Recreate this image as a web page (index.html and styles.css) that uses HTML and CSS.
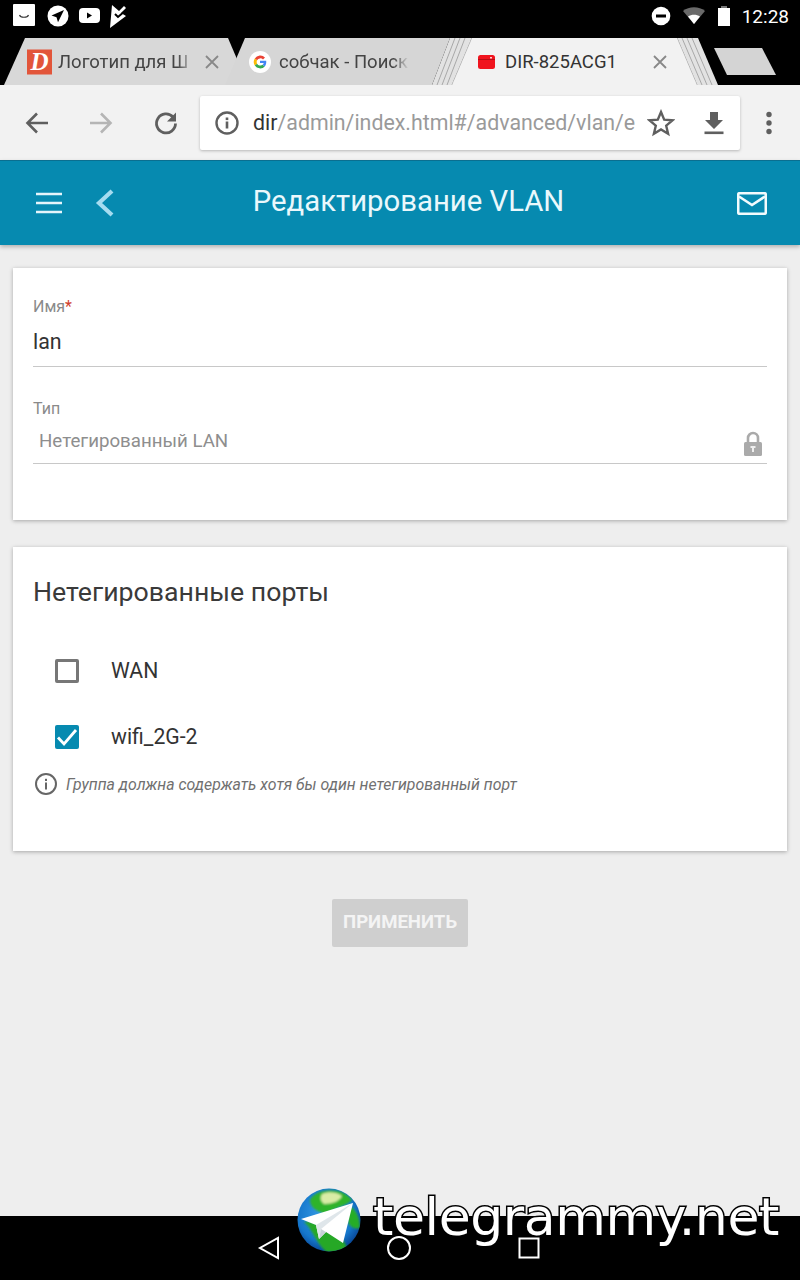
FILE: index.html
```html
<!DOCTYPE html>
<html lang="ru">

<head>
    <meta charset="UTF-8">
    <meta name="viewport" content="width=device-width, initial-scale=1.0">
    <title>Редактирование VLAN</title>
    <link rel="stylesheet" href="styles.css">
</head>

<body>
    <div class="status-bar">
        <div class="status-left">
            <svg width="26" height="26" viewBox="0 0 26 26"><rect x="1" y="1" width="22" height="22" rx="1" fill="#fff"/><path d="M7.500 12c1 3 8 3 9 0" fill="none" stroke="#333" stroke-width="1.100"/></svg>
            <svg width="24" height="24" viewBox="0 0 24 24"><circle cx="12" cy="12" r="10.5" fill="#fff"/><path d="M18 6 5.500 11.500l5 1.800 1.500 5z" fill="#000"/></svg>
            <svg width="24" height="24" viewBox="0 0 24 24"><rect x="1" y="4" width="21" height="15" rx="4" fill="#fff"/><path d="M9 8.500v6l5-3z" fill="#000"/></svg>
            <svg width="24" height="24" viewBox="0 0 24 24"><path d="M2 1l7 6 5-5 2 2-5 5 5 3-16 12z" fill="#fff"/><path d="M5 10l3 3 7-6" fill="none" stroke="#000" stroke-width="2"/></svg>
        </div>
        <div class="status-right">
            <svg width="20" height="20" viewBox="0 0 20 20"><circle cx="10" cy="10" r="9.300" fill="#fff"/><rect x="5" y="8.500" width="10" height="3" fill="#000"/></svg>
            <svg width="24" height="20" viewBox="0 0 24 20"><path d="M1 5c6-5 16-5 22 0L12 18z" fill="#6a6a6a"/><path d="M6 10.500c3.500-2.500 8.500-2.500 12 0L12 18z" fill="#fff"/></svg>
            <svg width="14" height="20" viewBox="0 0 14 20"><rect x="4" y="0" width="6" height="3" fill="#777"/><rect x="1" y="2" width="12" height="18" fill="#fff"/></svg>
            <span class="clock">12:28</span>
        </div>
    </div>

    <div class="tab-strip">
        <div class="tab tab-first">
            <svg class="favicon" width="25" height="26" viewBox="0 0 25 26"><rect width="25" height="25" y="0.500" fill="#e2553a"/><text x="12.500" y="20.500" text-anchor="middle" class="favicon-letter">D</text></svg>
            <span class="tab-title">Логотип для Ш</span>
            <svg class="tab-close" width="16" height="16" viewBox="0 0 16 16"><path d="M2 2l12 12M14 2 2 14" stroke="#888" stroke-width="1.800"/></svg>
        </div>
        <div class="tab tab-second">
            <svg class="favicon" width="22" height="22" viewBox="0 0 22 22"><circle cx="11" cy="11" r="11" fill="#fff"/><path d="M16 6.500A6.500 6.500 0 0 0 5.800 7.500l2.300 1.800A3.700 3.700 0 0 1 14 8.500z" fill="#ea4335"/><path d="M5.800 7.500a6.500 6.500 0 0 0 0 7l2.300-1.800a3.700 3.700 0 0 1 0-3.400z" fill="#fbbc05"/><path d="M5.800 14.500a6.500 6.500 0 0 0 10 1l-2.200-1.800a3.700 3.700 0 0 1-5.500-1z" fill="#34a853"/><path d="M11 9.800h6.200c.3 2.300-.3 4.300-1.400 5.700l-2.200-1.800c.6-.5 1-1.100 1.100-1.700H11z" fill="#4285f4"/></svg>
            <span class="tab-title">собчак - Поиск</span>
        </div>
        <svg class="tab-stack tab-stack-left" width="40" height="47" viewBox="0 0 40 47">
            <path d="M0 47 18 0h22L20 47z" fill="#e2e2e2"/>
            <path d="M5 47 23 0M10 47 28 0M15 47 33 0M20 47 40 0" stroke="#a8a8a8" stroke-width="1" fill="none"/>
        </svg>
        <div class="tab tab-active">
            <svg class="favicon" width="18" height="16" viewBox="0 0 18 16"><rect y="1" width="17" height="14" rx="2.500" fill="#f0141e"/><rect y="5" width="17" height="1" fill="#b80d14"/><rect x="12" y="3" width="2" height="1.500" fill="#ffd0d0"/></svg>
            <span class="tab-title">DIR-825ACG1</span>
            <svg class="tab-close" width="16" height="16" viewBox="0 0 16 16"><path d="M2 2l12 12M14 2 2 14" stroke="#888" stroke-width="1.800"/></svg>
        </div>
        <svg class="tab-stack tab-stack-right" width="41" height="47" viewBox="0 0 41 47">
            <path d="M0 0h21l20 47H20z" fill="#e2e2e2"/>
            <path d="M0 0l20 47M5 0l20 47M10 0l20 47M15 0l20 47" stroke="#a8a8a8" stroke-width="1" fill="none"/>
        </svg>
        <div class="new-tab"></div>
    </div>

    <div class="toolbar">
        <svg width="26" height="26" viewBox="0 0 26 26"><path d="M24 13H4M13 3.500 3.500 13l9.500 9.500" fill="none" stroke="#5f5f5f" stroke-width="2.600"/></svg>
        <svg class="nav-forward" width="26" height="26" viewBox="0 0 26 26"><path d="M2 13h20M13 3.500l9.500 9.500-9.500 9.500" fill="none" stroke="#b5b5b5" stroke-width="2.600"/></svg>
        <svg class="nav-reload" width="26" height="26" viewBox="0 0 26 26"><path d="M20 7a9.500 9.500 0 1 0 2.500 6.500" fill="none" stroke="#5f5f5f" stroke-width="2.800"/><path d="M23 2.500v9h-9z" fill="#5f5f5f"/></svg>
        <div class="omnibox">
            <svg class="omni-info" width="26" height="26" viewBox="0 0 26 26"><circle cx="13" cy="13" r="10.500" fill="none" stroke="#5f5f5f" stroke-width="2.400"/><rect x="11.700" y="11.500" width="2.600" height="7" fill="#5f5f5f"/><rect x="11.700" y="7.500" width="2.600" height="2.600" fill="#5f5f5f"/></svg>
            <div class="omni-url"><span class="omni-host">dir</span>/admin/index.html#/advanced/vlan/e</div>
            <svg class="omni-star" width="28" height="28" viewBox="0 0 28 28"><path d="M14 3l3.200 7.600 8.200.7-6.200 5.400 1.900 8L14 20.500l-7.100 4.200 1.900-8-6.200-5.400 8.200-.7z" fill="none" stroke="#5f5f5f" stroke-width="2.400"/></svg>
            <svg class="omni-download" width="24" height="26" viewBox="0 0 24 26"><path d="M8 2h8v8h5L12 19 3 10h5z" fill="#5f5f5f"/><rect x="2.500" y="21.500" width="19" height="2.600" fill="#5f5f5f"/></svg>
        </div>
        <svg class="nav-menu" width="8" height="24" viewBox="0 0 8 24"><circle cx="4" cy="3.500" r="2.700" fill="#5f5f5f"/><circle cx="4" cy="12" r="2.700" fill="#5f5f5f"/><circle cx="4" cy="20.500" r="2.700" fill="#5f5f5f"/></svg>
    </div>

    <header class="app-header">
        <svg class="menu-icon" width="26" height="22" viewBox="0 0 26 22"><path d="M0 2h26M0 11h26M0 20h26" stroke="#e4f5fb" stroke-width="2.400"/></svg>
        <svg class="back-icon" width="22" height="30" viewBox="0 0 22 30"><path d="M19 3 6 15l13 12" fill="none" stroke="#a5dcf0" stroke-width="4.200"/></svg>
        <h1 class="app-title">Редактирование VLAN</h1>
        <svg class="mail-icon" width="30" height="23" viewBox="0 0 30 23"><rect x="1.200" y="1.200" width="27.600" height="20.600" rx="1.500" fill="none" stroke="#f2fbfd" stroke-width="2.600"/><path d="M2 4.500l13 8.500 13-8.500" fill="none" stroke="#f2fbfd" stroke-width="2.600"/></svg>
    </header>

    <main class="content">
        <section class="card card-fields">
            <div class="field">
                <label class="field-label">Имя<span class="required">*</span></label>
                <div class="field-value">lan</div>
            </div>
            <div class="field field-locked">
                <label class="field-label">Тип</label>
                <div class="field-value">
                    Нетегированный LAN
                    <svg width="20" height="26" viewBox="0 0 20 26"><path d="M5 12V7a5 5 0 0 1 10 0v5" fill="none" stroke="#aaa" stroke-width="2.600"/><rect x="1" y="11" width="18" height="14" rx="1.500" fill="#aaa"/><rect x="9" y="16" width="2" height="5" fill="#eee"/><rect x="7.500" y="15" width="5" height="2" fill="#eee"/></svg>
                </div>
            </div>
        </section>

        <section class="card card-ports">
            <h2 class="card-title">Нетегированные порты</h2>
            <div class="port">
                <span class="checkbox"></span>
                <span class="port-name">WAN</span>
            </div>
            <div class="port">
                <span class="checkbox checkbox-on">
                    <svg width="24" height="24" viewBox="0 0 24 24"><path d="M3 12.500l6 6.500L21 5" fill="none" stroke="#fff" stroke-width="2.800"/></svg>
                </span>
                <span class="port-name">wifi_2G-2</span>
            </div>
            <div class="hint">
                <svg width="24" height="24" viewBox="0 0 24 24"><circle cx="12" cy="12" r="10" fill="none" stroke="#666" stroke-width="2"/><rect x="11" y="10.500" width="2" height="7" fill="#666"/><rect x="11" y="6.800" width="2" height="2.200" fill="#666"/></svg>
                <span>Группа должна содержать хотя бы один нетегированный порт</span>
            </div>
        </section>

        <div class="actions">
            <button class="apply-button" disabled>ПРИМЕНИТЬ</button>
        </div>
    </main>

    <div class="nav-bar">
        <svg width="24" height="26" viewBox="0 0 24 26"><path d="M21 3v20L3 13z" fill="none" stroke="#fff" stroke-width="2"/></svg>
        <svg width="26" height="26" viewBox="0 0 26 26"><circle cx="13" cy="13" r="11" fill="none" stroke="#fff" stroke-width="2"/></svg>
        <svg width="24" height="24" viewBox="0 0 24 24"><rect x="2.500" y="2.500" width="19" height="19" fill="none" stroke="#fff" stroke-width="2"/></svg>
    </div>

    <!-- watermark over the nav bar -->
    <div class="watermark">
        <svg width="66" height="64" viewBox="0 0 66 64">
            <defs>
                <radialGradient id="globe" cx="45%" cy="40%" r="60%">
                    <stop offset="0" stop-color="#3aa0e8"/>
                    <stop offset="0.75" stop-color="#1577cc"/>
                    <stop offset="1" stop-color="#0a4a9a"/>
                </radialGradient>
                <clipPath id="globe-clip"><circle cx="33" cy="32" r="31.500"/></clipPath>
                <filter id="land-blur"><feGaussianBlur stdDeviation="1.200"/></filter>
            </defs>
            <circle cx="33" cy="32" r="31.500" fill="url(#globe)"/>
            <g clip-path="url(#globe-clip)">
                <g filter="url(#land-blur)">
                    <path d="M14 12C20 0 46-2 56 12 50 18 38 20 30 26 22 24 14 20 14 12z" fill="#2fb32a"/>
                    <path d="M26 6c6-3 16-2 20 2-2 5-10 8-18 8-4-3-4-7-2-10z" fill="#d9eca6"/>
                    <path d="M52 18c6 0 12 10 12 22-6 2-12-2-12-8z" fill="#25ad25"/>
                    <path d="M8 34c8 6 10 18 22 30h22c-2-12-12-22-26-26-6-2-12-6-18-4z" fill="#25a825"/>
                </g>
            </g>
            <path d="M57 15 5 31l15 6 3 14 7-7 17 11z" fill="#fff"/>
            <path d="M57 15 20 37l3 14 2-10z" fill="#dfe6ea"/>
            <path d="M25 41l-2 10 7-7z" fill="#c8d2d8"/>
        </svg>
        <span class="watermark-text">telegrammy.net</span>
    </div>
</body>

</html>
```

FILE: styles.css
```css
* {
    box-sizing: border-box;
}

html,
body {
    margin: 0;
    height: 1280px;
    overflow: hidden;
}

body {
    position: relative;
    display: flex;
    flex-direction: column;
    font-family: Roboto, "Noto Sans", sans-serif;
    background-color: #eeeeee;
    color: #333333;
}

/* android status bar */
.status-bar {
    height: 38px;
    background-color: #000000;
    display: flex;
    justify-content: space-between;
    align-items: center;
    padding: 0 11px 6px 12px;
}

.status-left,
.status-right {
    display: flex;
    align-items: center;
}

.status-left {
    gap: 8px;
}

.status-right {
    gap: 11px;
}

.clock {
    color: #ffffff;
    font-size: 19px;
}

/* chrome tabs */
.tab-strip {
    height: 47px;
    background-color: #000000;
    display: flex;
}

.tab {
    height: 47px;
    display: flex;
    align-items: center;
    font-size: 18.5px;
    flex-shrink: 0;
}

.tab-title {
    overflow: hidden;
    white-space: nowrap;
}

.favicon-letter {
    font-family: "Liberation Serif", serif;
    font-size: 25px;
    font-weight: 700;
    font-style: italic;
    fill: #ffffff;
}

.tab-first {
    width: 244px;
    margin-left: 4px;
    padding-left: 23px;
    background-color: #d8d8d8;
    clip-path: polygon(0 100%, 21px 0, 224px 0, 244px 100%);
}

.tab-first .tab-title {
    width: 136px;
    margin-left: 6px;
    color: #444444;
    -webkit-mask-image: linear-gradient(to right, #000 88%, transparent 100%);
    mask-image: linear-gradient(to right, #000 88%, transparent 100%);
}

.tab-first .tab-close {
    margin-left: 10px;
}

.tab-second {
    width: 225px;
    margin-left: -23px;
    padding-left: 24px;
    background-color: #d6d6d6;
    clip-path: polygon(0 100%, 20px 0, 225px 0, 207px 100%);
}

.tab-second .tab-title {
    width: 130px;
    margin-left: 8px;
    color: #444444;
    -webkit-mask-image: linear-gradient(to right, #000 88%, transparent 100%);
    mask-image: linear-gradient(to right, #000 88%, transparent 100%);
}

.tab-stack {
    flex-shrink: 0;
}

.tab-stack-left {
    margin-left: -18px;
}

.tab-active {
    width: 245px;
    margin-left: -20px;
    padding-left: 26px;
    background-color: #f2f2f2;
    clip-path: polygon(0 100%, 20px 0, 225px 0, 245px 100%);
}

.tab-active .tab-title {
    width: 137px;
    margin-left: 9px;
    color: #333333;
}

.tab-active .tab-close {
    margin-left: 10px;
}

.tab-stack-right {
    margin-left: -20px;
}

.new-tab {
    width: 62px;
    height: 27px;
    margin: 10px 0 0 -4px;
    background-color: #d4d4d4;
    clip-path: polygon(0 0, 48px 0, 100% 100%, 13px 100%);
}

/* chrome toolbar */
.toolbar {
    height: 75px;
    background-color: #f2f2f2;
    display: flex;
    align-items: center;
    padding-left: 24px;
}

.nav-forward {
    margin-left: 38px;
}

.nav-reload {
    margin-left: 39px;
}

.omnibox {
    width: 540px;
    height: 54px;
    margin-left: 21px;
    background-color: #ffffff;
    border-radius: 2px;
    box-shadow: 0 1px 3px rgba(0, 0, 0, 0.25);
    display: flex;
    align-items: center;
    padding-left: 14px;
}

.omni-url {
    width: 382px;
    margin-left: 13px;
    font-size: 21.35px;
    color: #9a9a9a;
    white-space: nowrap;
}

.omni-host {
    color: #333333;
}

.omni-star {
    margin-left: 12px;
}

.omni-download {
    margin-left: 27px;
}

.nav-menu {
    margin-left: 25px;
}

/* app header */
.app-header {
    height: 85px;
    background-color: #068ab0;
    border-top: 1px solid #0a6f90;
    box-shadow: 0 2px 4px rgba(0, 0, 0, 0.25);
    display: flex;
    align-items: center;
    padding: 0 33px 4px 36px;
}

.menu-icon {
    flex-shrink: 0;
    margin-top: 3px;
}

.back-icon {
    margin: 3px 0 0 31px;
    flex-shrink: 0;
}

.app-title {
    flex: 1;
    margin: -1px 0 0;
    padding-right: 35px;
    font-size: 29.3px;
    font-weight: 400;
    text-align: center;
    color: #eaf8fc;
}

.mail-icon {
    flex-shrink: 0;
    margin-top: 5px;
}

/* page content */
.content {
    flex: 1;
    padding: 23px 13px 0;
}

.card {
    background-color: #ffffff;
    box-shadow: 0 1px 4px rgba(0, 0, 0, 0.3);
    padding: 0 20px;
}

.card-fields {
    height: 252px;
    padding-top: 30px;
}

.field {
    border-bottom: 1px solid #c8c8c8;
}

.field-label {
    display: block;
    font-size: 16px;
    line-height: 18px;
    color: #8a8a8a;
}

.required {
    color: #d0402a;
}

.field .field-value {
    height: 50px;
    font-size: 21.4px;
    line-height: 52px;
    color: #333333;
}

.field-locked {
    margin-top: 32px;
}

.field-locked .field-label {
    padding-top: 1px;
}

.field-locked .field-value {
    height: 45px;
    padding-left: 6px;
    display: flex;
    justify-content: space-between;
    align-items: center;
    font-size: 18.7px;
    line-height: 24px;
    color: #8e8e8e;
}

.field-locked svg {
    margin: 6px 4px 0 0;
}

.card-ports {
    height: 304px;
    margin-top: 27px;
    padding-top: 29px;
}

.card-title {
    margin: 0 0 30px;
    font-size: 26.7px;
    line-height: 32px;
    font-weight: 400;
    color: #3a3a3a;
}

.port {
    height: 66px;
    display: flex;
    align-items: center;
    padding-left: 22px;
}

.checkbox {
    width: 24px;
    height: 24px;
    border: 3px solid #777777;
    border-radius: 2px;
    flex-shrink: 0;
}

.checkbox-on {
    border: none;
    background-color: #068ab0;
}

.checkbox-on svg {
    display: block;
}

.port-name {
    margin: -2px 0 0 32px;
    font-size: 21.2px;
    color: #333333;
}

.hint {
    display: flex;
    align-items: center;
    gap: 8px;
    margin: 2px 0 0 1px;
    font-size: 15.85px;
    font-style: italic;
    color: #707070;
}

.actions {
    display: flex;
    justify-content: center;
    margin-top: 48px;
}

.apply-button {
    width: 136px;
    height: 48px;
    padding: 0 0 2px;
    border: none;
    border-radius: 2px;
    background-color: #cfcfcf;
    color: #f4f4f4;
    font-family: Roboto, sans-serif;
    font-size: 18.6px;
    font-weight: 700;
}

/* android nav bar */
.nav-bar {
    height: 64px;
    background-color: #000000;
    display: flex;
    align-items: center;
    padding-left: 257px;
    gap: 105px;
}

.watermark {
    position: absolute;
    left: 296px;
    top: 1188px;
    display: flex;
    align-items: center;
    gap: 11px;
}

.watermark svg {
    flex-shrink: 0;
}

.watermark-text {
    font-family: "DejaVu Sans", sans-serif;
    font-size: 52px;
    line-height: 58px;
    color: #ffffff;
    -webkit-text-stroke: 3px #000000;
    paint-order: stroke fill;
    letter-spacing: -0.4px;
    margin-top: -6px;
}
```
